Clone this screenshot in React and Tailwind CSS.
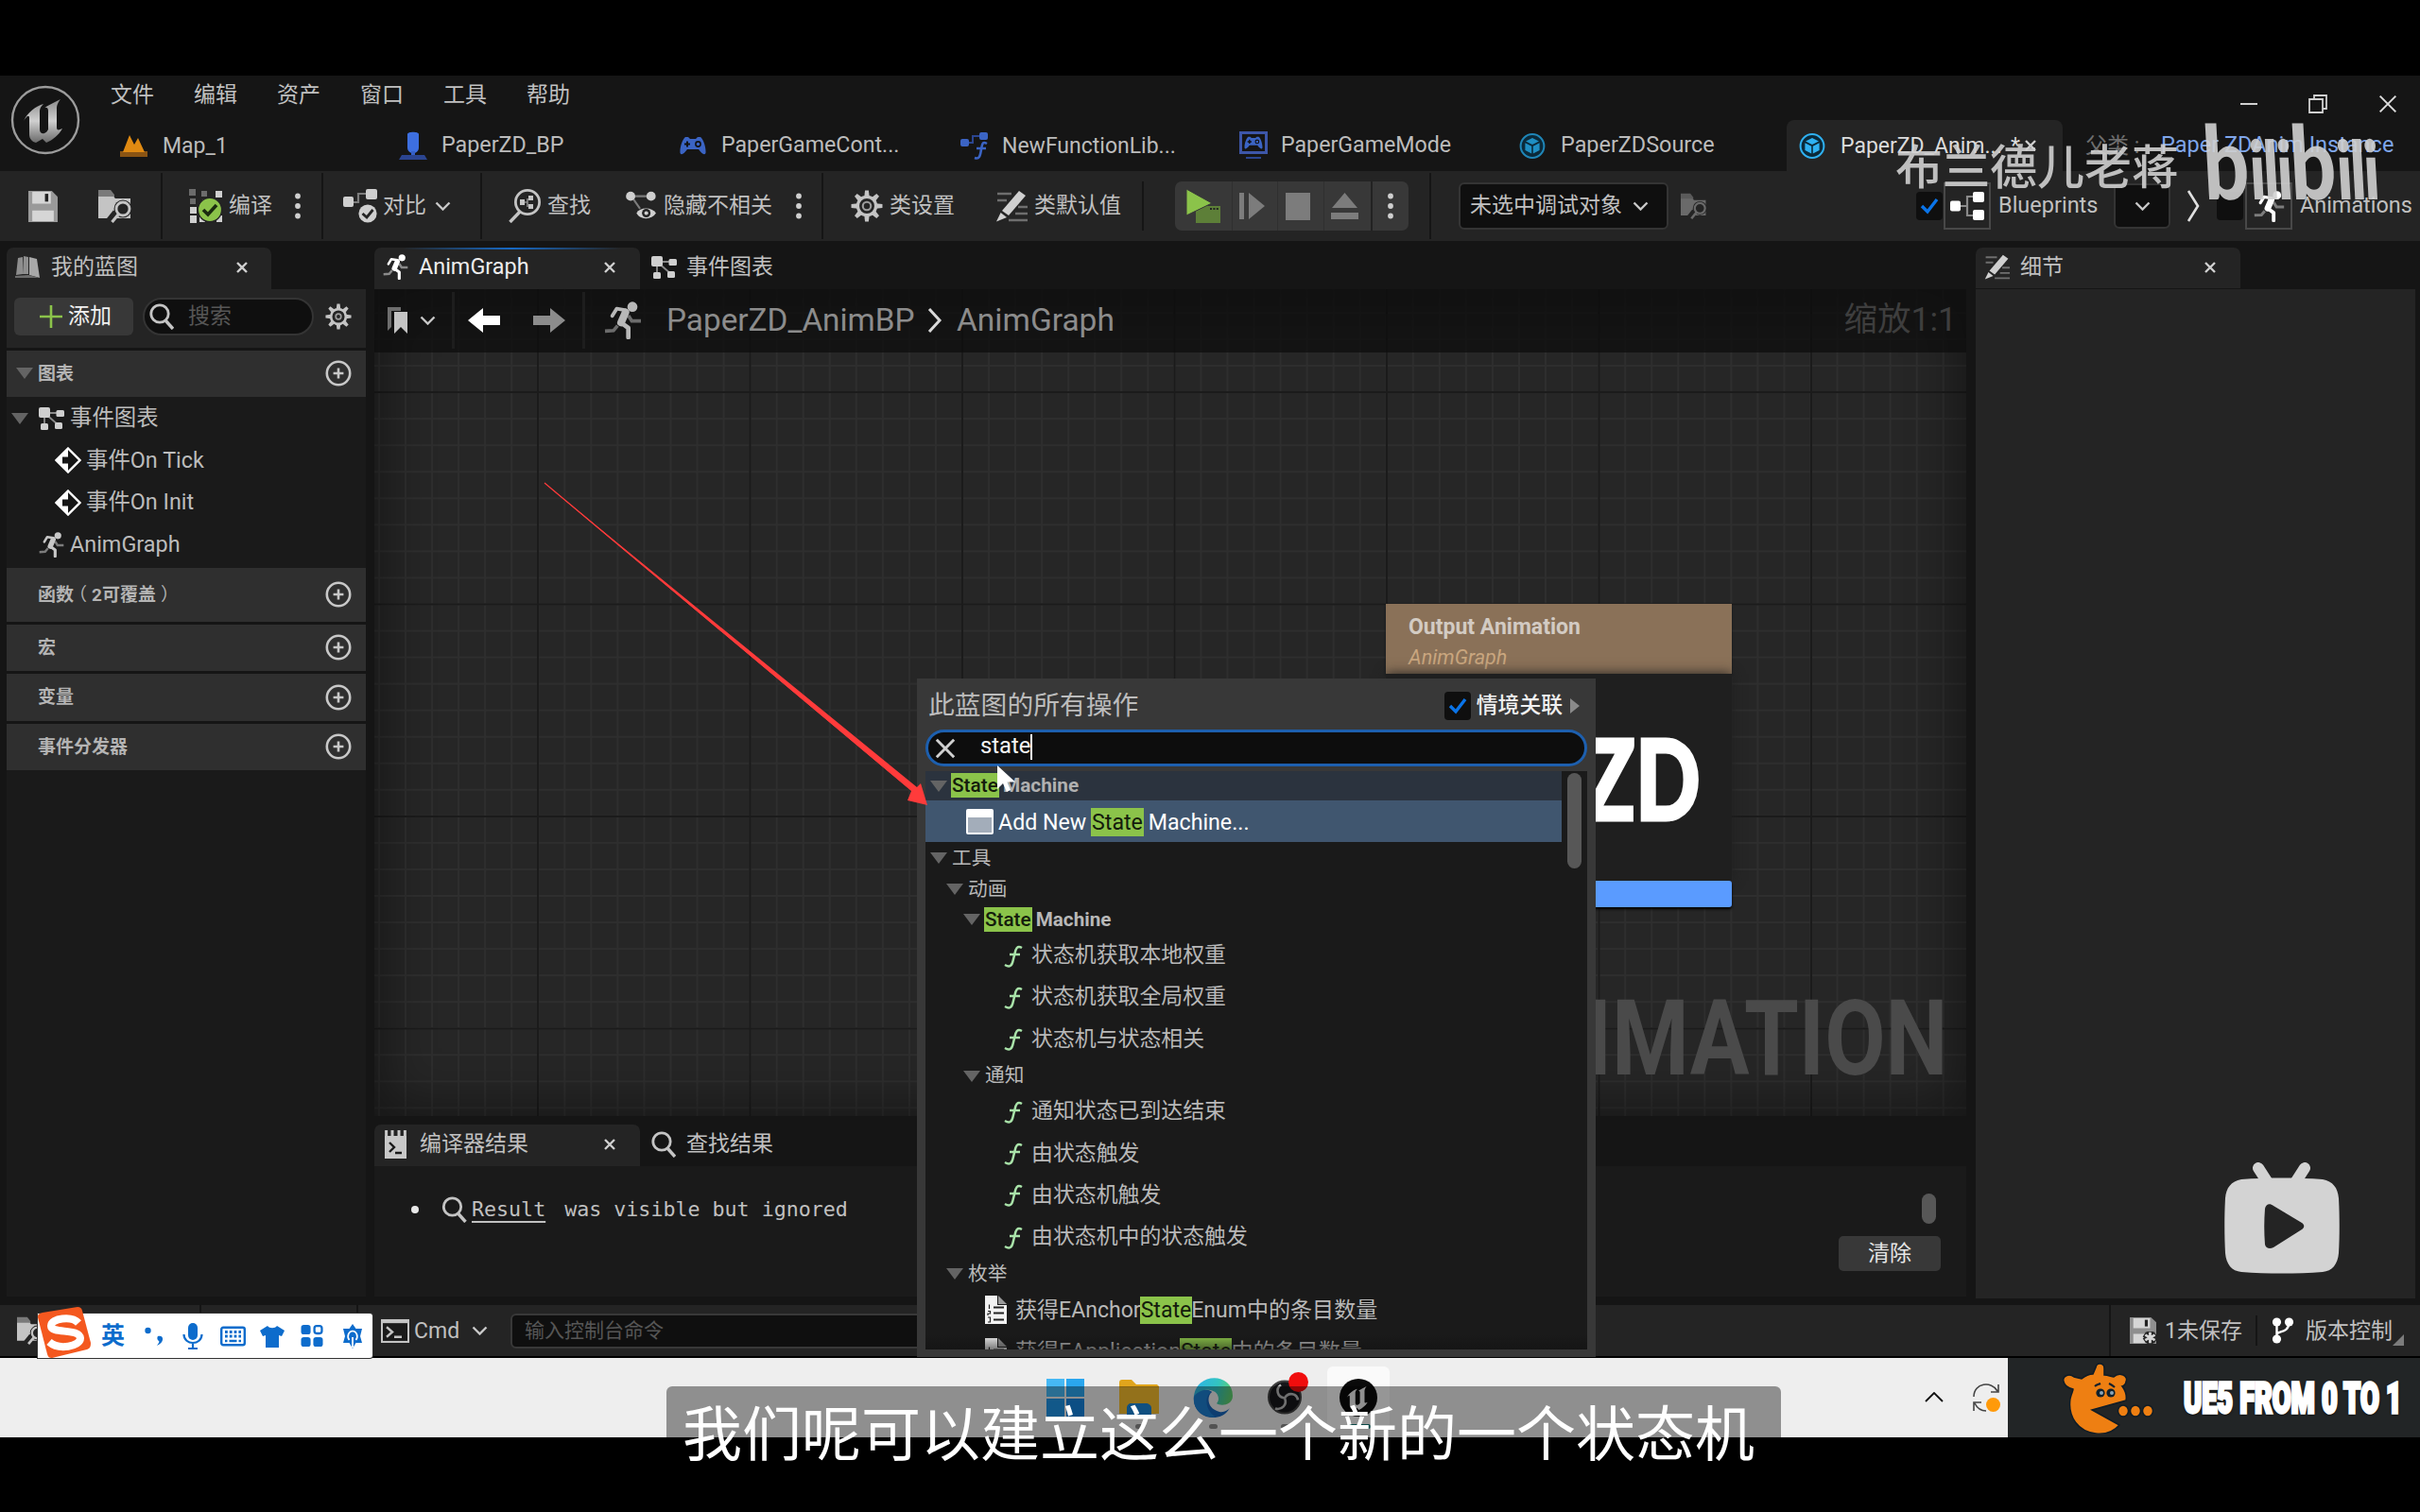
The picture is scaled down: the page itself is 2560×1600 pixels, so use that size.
import React from "react";

const Svg = ({ c = "", vb = "0 0 24 24", children, stretch }) => (
  <svg viewBox={vb} className={"shrink-0 " + c} fill="none" preserveAspectRatio={stretch ? "none" : "xMidYMid meet"}>
    {children}
  </svg>
);

const T = ({ c = "", children }) => <span className={"shrink-0 whitespace-nowrap " + c}>{children}</span>;

const Divider = ({ c = "" }) => <div className={"w-[2px] shrink-0 bg-[#151515] " + c} />;

const Chevron = ({ c = "" }) => (
  <Svg vb="0 0 17 10" c={"h-[10px] w-[17px] " + c}>
    <path d="M1.5 1.5 8.5 8.5 15.5 1.5" stroke="#c8c8c8" strokeWidth="2.4" />
  </Svg>
);

const Cross = ({ c = "", color = "#d0d0d0", w = 2.4 }) => (
  <Svg vb="0 0 12 12" c={c}>
    <path d="M1 1 11 11M11 1 1 11" stroke={color} strokeWidth={w} />
  </Svg>
);

const Dots = ({ c = "" }) => (
  <Svg vb="0 0 6 28" c={"h-[28px] w-[6px] " + c}>
    <circle cx="3" cy="3.5" r="2.9" fill="#cfcfcf" />
    <circle cx="3" cy="14" r="2.9" fill="#cfcfcf" />
    <circle cx="3" cy="24.5" r="2.9" fill="#cfcfcf" />
  </Svg>
);

const Save = ({ c = "", star }) => (
  <Svg vb="0 0 30 32" stretch c={c}>
    <path d="M0 0H24L30 6V32H0Z" fill={star ? "#8f8f8f" : "#9a9a9a"} />
    <path d="M4 1H23V13H4ZM4 20H26V31H4Z" fill="#d6d6d6" />
    <rect x="17" y="3" width="3.4" height="8" fill="#222" />
    {star && <path d="M23 17V32M16.5 20.5 29.5 28.5M29.5 20.5 16.5 28.5" stroke="#242424" strokeWidth="7" />}
    {star && <path d="M23 18V31M17.5 21.3 28.5 27.7M28.5 21.3 17.5 27.7" stroke="#d6d6d6" strokeWidth="3" />}
  </Svg>
);

const FolderSearch = ({ c = "", a = "#c4c4c4", b = "#7a7a7a", bg = "#242424" }) => (
  <Svg vb="0 0 36 36" c={c}>
    <path d="M0 1H13L17 6V10H0Z" fill={b} />
    <path d="M0 8H16L18 10H34V31H0Z" fill={a} />
    <circle cx="26" cy="21" r="9.5" fill={bg} />
    <path d="M19 25 11 35" stroke={bg} strokeWidth="8" />
    <circle cx="26" cy="21" r="7" stroke={a} strokeWidth="2.8" />
    <path d="M21.5 26.5 14.5 35" stroke={a} strokeWidth="3.2" />
  </Svg>
);

const Magnifier = ({ c = "", color = "#c4c4c4" }) => (
  <Svg vb="0 0 26 28" c={c}>
    <circle cx="11" cy="11" r="9.2" stroke={color} strokeWidth="2.8" />
    <path d="M17 18 25 27" stroke={color} strokeWidth="3.4" />
  </Svg>
);

const Gear = ({ c = "", color = "#c4c4c4", hub = 3.2 }) => (
  <Svg vb="0 0 32 32" c={c}>
    {[0, 45, 90, 135, 180, 225, 270, 315].map((r) => (
      <path key={r} d="M13.4 7 14.2 0.5H17.8L18.6 7Z" fill={color} transform={`rotate(${r} 16 16)`} />
    ))}
    <circle cx="16" cy="16" r="9" stroke={color} strokeWidth="3" />
    <circle cx="16" cy="16" r={hub} stroke={color} strokeWidth="2" opacity="0.75" />
  </Svg>
);

const Runner = ({ c = "", color = "#d0d0d0", dim = "#7c7c7c" }) => (
  <Svg vb="0 0 24 24" c={c}>
    <path d="M15.5 9 17.6 12.4 23.4 12.4M0.6 18.8 6 18.5 8.6 15.4" stroke={dim} strokeWidth="2.2" />
    <circle cx="18" cy="3.4" r="3.2" fill={color} />
    <path d="M14 5.6 8 4.6 5.2 9.2" stroke={color} strokeWidth="2.3" strokeLinejoin="round" strokeLinecap="round" />
    <path d="M13.6 7 10.8 13.4" stroke={color} strokeWidth="4.8" strokeLinecap="round" />
    <path d="M11 13.6 15.4 16.8 15.4 22.8" stroke={color} strokeWidth="2.8" strokeLinejoin="round" strokeLinecap="round" />
  </Svg>
);

const GraphIcon = ({ c = "" }) => (
  <Svg vb="0 0 27 24" c={c}>
    <path d="M6 6H22M6 6V20M6 6 21 19" stroke="#8a8a8a" strokeWidth="1.8" />
    <rect x="0" y="0" width="12" height="11" rx="2" fill="#cfcfcf" />
    <rect x="18.5" y="3" width="8.5" height="7" rx="1.5" fill="#cfcfcf" />
    <rect x="2" y="17" width="8" height="7" rx="1.5" fill="#cfcfcf" />
    <rect x="17" y="16" width="8" height="7" rx="1.5" fill="#cfcfcf" />
  </Svg>
);

const EditIcon = ({ c = "" }) => (
  <Svg vb="0 0 34 34" c={c}>
    <path d="M2 4H17M2 11H12M24 18H34M21 25H34M14 32H34" stroke="#6e6e6e" strokeWidth="2.4" />
    <path d="M25 1 32 6 14 27 7 22Z" fill="#d0d0d0" />
    <path d="M5.6 24 12 29 1 33.5Z" fill="#d0d0d0" />
  </Svg>
);

const CirclePlus = () => (
  <Svg vb="0 0 28 28" c="h-[28px] w-[28px]">
    <circle cx="14" cy="14" r="12.2" stroke="#c8c8c8" strokeWidth="2.6" />
    <path d="M14 8.6V19.4M8.6 14H19.4" stroke="#c8c8c8" strokeWidth="2.6" />
  </Svg>
);

const Tri = ({ c = "" }) => (
  <Svg vb="0 0 18 12" c={"h-[12px] w-[18px] " + c}>
    <path d="M0 0H18L9 12Z" fill="#646464" />
  </Svg>
);

const UnrealU = ({ fill }) => (
  <path
    fill={fill}
    d="M14 38C18 29 27 22 35 20C31 24 31 26 31 29V47C31 51 34 52 36 51C38 50 39 49 40 47V27C40 24 38 23 36 24C41 21 47 18 53 15C49 20 49 23 49 26V45C49 48 51 48 55 46C51 53 45 58 38 61L34 57L27 61C23 60 20 57 20 52V35C20 31 17 33 14 38Z"
  />
);

const MENUS = ["文件", "编辑", "资产", "窗口", "工具", "帮助"];

const Cube = ({ on }) => (
  <Svg vb="0 0 28 28" c="h-[29px] w-[28px]">
    <circle cx="14" cy="14" r="12.4" stroke={on ? "#2fb1f2" : "#1f86b8"} strokeWidth="2" fill="#0b2a3a" />
    <path d="M14 5.5 21 9 14 12.6 7 9ZM6.4 10.8 13.2 14.2V22L6.4 18.4ZM21.6 10.8 14.8 14.2V22L21.6 18.4Z" fill={on ? "#2fb1f2" : "#1f8fc4"} />
  </Svg>
);

const Gamepad = ({ c = "" }) => (
  <Svg vb="0 0 28 20" c={c}>
    <path d="M6 1H9L11 3H17L19 1H22C25 3 28 12 27.5 18C26 21 23 18 20 14H8C5 18 2 21 .5 18C0 12 3 3 6 1Z" fill="#3b64c4" />
    <path d="M8 5.5V11.5M5 8.5H11" stroke="#111" strokeWidth="2" />
    <circle cx="19.5" cy="8.5" r="2.6" stroke="#111" strokeWidth="1.6" />
  </Svg>
);

function TitleBar() {
  return (
    <div className="flex h-[101px] shrink-0">
      <div className="w-[117px] shrink-0 pl-[11px] pt-[10px]">
        <Svg vb="0 0 74 74" c="h-[74px] w-[74px]">
          <defs>
            <linearGradient id="ug" x1="0" y1="0" x2="0" y2="1">
              <stop offset="0" stopColor="#8a8a8a" />
              <stop offset="0.5" stopColor="#d0d0d0" />
              <stop offset="1" stopColor="#6a6a6a" />
            </linearGradient>
          </defs>
          <circle cx="37" cy="37" r="35" stroke="#9c9c9c" strokeWidth="2.4" fill="#141414" />
          <UnrealU fill="url(#ug)" />
        </Svg>
      </div>
      <div className="flex flex-1 flex-col">
        <div className="flex h-[47px] pt-[7px]">
          {MENUS.map((m) => (
            <div key={m} className="flex h-[26px] w-[88px] items-center text-[#c0c0c0]">{m}</div>
          ))}
          <div className="ml-auto flex h-[46px] items-center pr-[24px]">
            <div className="h-[2px] w-[18px] bg-[#d0d0d0]" />
            <Svg vb="0 0 20 20" c="ml-[54px] h-[20px] w-[20px]">
              <path d="M6 5V1H19V15H15" stroke="#d0d0d0" strokeWidth="1.8" />
              <path d="M1 5H15V19H1Z" stroke="#d0d0d0" strokeWidth="1.8" />
            </Svg>
            <Cross c="ml-[54px] h-[20px] w-[20px]" w={1.2} color="#dcdcdc" />
          </div>
        </div>
        <div className="flex h-[54px] items-center text-[#bcbcbc]">
          <div className="flex w-[305px] shrink-0 items-center pl-[10px]">
            <Svg vb="0 0 29 24" c="mr-[16px] h-[24px] w-[29px]">
              <path d="M0 18H29V24H0Z" fill="#8a5413" />
              <path d="M3 19 10 1 15 11 19 4 26 19Z" fill="#e08a12" />
            </Svg>
            <T>Map_1</T>
          </div>
          <div className="flex w-[297px] shrink-0 items-center text-[23.3px]">
            <Svg vb="0 0 30 30" c="mr-[15px] h-[30px] w-[30px]">
              <path d="M9 3C9 0 21 0 21 3V17C21 21 18 23 15 23S9 21 9 17Z" fill="#3d6fe0" />
              <path d="M13 21H17V27H13Z" fill="#3560c8" />
              <path d="M3 25H27L30 30H0Z" fill="#2b4590" />
            </Svg>
            <T>PaperZD_BP</T>
          </div>
          <div className="flex w-[297px] shrink-0 items-center text-[23.2px]">
            <Gamepad c="mr-[16px] h-[20px] w-[28px]" />
            <T>PaperGameCont...</T>
          </div>
          <div className="flex w-[295px] shrink-0 items-center">
            <Svg vb="0 0 30 30" c="mr-[14px] h-[30px] w-[30px]">
              <rect x="0" y="8" width="9" height="8" rx="2" fill="#3b64c4" />
              <rect x="20" y="1" width="9" height="8" rx="2" fill="#3b64c4" />
              <path d="M9 12H13V5H20" stroke="#2b4590" strokeWidth="2" />
              <path d="M28 13C23 10 23 14 22 19C21 26 20 30 15 28M17 18H27" stroke="#3b64c4" strokeWidth="2.6" />
            </Svg>
            <T>NewFunctionLib...</T>
          </div>
          <div className="flex w-[296px] shrink-0 items-center text-[23.2px]">
            <div className="mr-[14px] flex h-[30px] w-[30px] shrink-0 flex-col items-center">
              <div className="flex h-[24px] w-[30px] items-center justify-center border-[3px] border-[#3d56a8]">
                <Gamepad c="h-[14px] w-[20px]" />
              </div>
              <div className="mt-[3px] h-[2px] w-[16px] bg-[#2b4590]" />
            </div>
            <T>PaperGameMode</T>
          </div>
          <div className="flex w-[283px] shrink-0 items-center text-[23.4px]">
            <div className="mr-[16px] flex"><Cube /></div>
            <T>PaperZDSource</T>
          </div>
          <div className="flex h-[54px] w-[292px] shrink-0 items-center rounded-t-[8px] bg-[#242424] pl-[13px] text-[#dcdcdc]">
            <Cube on />
            <T c="ml-[16px] w-[180px]">PaperZD_Anim...</T>
            <T>*</T>
            <Cross c="ml-[5px] h-[12px] w-[12px]" />
          </div>
          <T c="ml-[24px] w-[80px] text-[#6e6e6e]">父类 :</T>
          <T c="text-[23.5px] text-[#7fa6ea]">Paper ZDAnim Instance</T>
        </div>
      </div>
    </div>
  );
}

const Check = ({ on, c = "" }) => (
  <div className={"flex h-[30px] w-[28px] shrink-0 items-center justify-center rounded-[4px] bg-[#0f0f0f] " + c}>
    {on && (
      <Svg vb="0 0 20 18" c="h-[18px] w-[20px]">
        <path d="M2 9 8 15 18 2" stroke="#0a74e8" strokeWidth="3.4" />
      </Svg>
    )}
  </div>
);

function Toolbar() {
  return (
    <div className="flex h-[74px] shrink-0 items-center bg-[#242424] text-[#c0c0c0]">
      <Save c="ml-[30px] h-[33px] w-[31px]" />
      <FolderSearch c="ml-[43px] h-[36px] w-[36px]" />
      <Divider c="ml-[30px] h-[70px]" />
      <Svg vb="0 0 36 36" c="ml-[28px] h-[36px] w-[36px]">
        <path d="M0 0H7V7H0ZM13 2H19V8H13ZM1 10H7V16H1Z" fill="#6c6c6c" />
        <path d="M28 2H35V9H28ZM1 19H8V26H1ZM1 28H8V36H1ZM11 29H17V35H11ZM29 28H35V35H29ZM14 11H19V16H14Z" fill="#cfcfcf" />
        <circle cx="22" cy="22" r="12.6" fill="#8bc34a" stroke="#242424" strokeWidth="1.4" />
        <path d="M15 22 20 27 29 17" stroke="#1b2b10" strokeWidth="3.6" />
      </Svg>
      <T c="-mt-[1px] ml-[6px] w-[47px]">编译</T>
      <Dots c="ml-[23px]" />
      <Divider c="ml-[22px] h-[70px]" />
      <Svg vb="0 0 36 36" c="ml-[21px] h-[36px] w-[36px]">
        <path d="M9 14H16V5H26" stroke="#7c7c7c" strokeWidth="2.2" />
        <rect x="0" y="8" width="11" height="11" rx="2" fill="#cfcfcf" />
        <rect x="24" y="0" width="12" height="11" rx="2" fill="#cfcfcf" />
        <circle cx="26" cy="26" r="9.6" fill="#cfcfcf" />
        <path d="M20.5 26 25 30 31.5 22" stroke="#242424" strokeWidth="2.8" />
      </Svg>
      <T c="-mt-[1px] ml-[6px] w-[47px]">对比</T>
      <Chevron c="ml-[8px]" />
      <Divider c="ml-[31px] h-[70px]" />
      <Svg vb="0 0 34 36" c="ml-[28px] h-[36px] w-[34px]">
        <circle cx="20" cy="14" r="12.6" stroke="#c4c4c4" strokeWidth="2.8" />
        <path d="M12.5 23.5 1.5 35" stroke="#c4c4c4" strokeWidth="3.4" />
        <path d="M16 14H20M20 10V19" stroke="#8a8a8a" strokeWidth="1.6" />
        <path d="M12 11H17V17H12ZM21 7H26V12H21ZM21 16H26V21H21Z" fill="#c4c4c4" />
      </Svg>
      <T c="-mt-[1px] ml-[7px] w-[47px]">查找</T>
      <Svg vb="0 0 34 34" c="ml-[35px] h-[32px] w-[34px]">
        <path d="M5 6H28M7 7 16 20" stroke="#7c7c7c" strokeWidth="2.2" />
        <circle cx="5.4" cy="6" r="5.2" fill="#cfcfcf" />
        <circle cx="28.4" cy="6" r="5.2" fill="#cfcfcf" />
        <path d="M12 25C16 18 29 18 34 25C29 33 16 33 12 25Z" fill="#cfcfcf" />
        <circle cx="23" cy="25" r="4.8" fill="#242424" />
        <circle cx="23" cy="25" r="2.2" fill="#cfcfcf" />
      </Svg>
      <T c="-mt-[1px] ml-[7px] w-[117px]">隐藏不相关</T>
      <Dots c="ml-[23px]" />
      <Divider c="ml-[21px] h-[70px]" />
      <Gear c="ml-[29px] h-[34px] w-[34px]" hub={4} />
      <T c="-mt-[1px] ml-[7px] w-[70px]">类设置</T>
      <EditIcon c="ml-[42px] h-[34px] w-[34px]" />
      <T c="-mt-[1px] ml-[7px] w-[93px]">类默认值</T>
      <Divider c="ml-[21px] h-[52px]" />
      <div className="ml-[33px] flex h-[52px] w-[247px] shrink-0 items-center rounded-[7px] bg-[#383838]">
        <Svg vb="0 0 36 36" c="ml-[12px] h-[36px] w-[36px]">
          <path d="M10 18H36V36H10Z" fill="#5d7f38" />
          <path d="M0 0 27 15 0 28Z" fill="#8bc34a" stroke="#383838" strokeWidth="1" />
          <path d="M25 21H34" stroke="#222" strokeWidth="2" strokeDasharray="2 1.4" />
        </Svg>
        <div className="ml-[12px] h-[52px] w-px bg-[#2f2f2f]" />
        <Svg vb="0 0 28 30" c="ml-[7px] h-[30px] w-[28px]">
          <path d="M0 1H5V29H0ZM10 1 27 15 10 29Z" fill="#7c7c7c" />
        </Svg>
        <div className="ml-[12px] h-[52px] w-px bg-[#2f2f2f]" />
        <div className="ml-[8px] h-[29px] w-[26px] bg-[#7c7c7c]" />
        <div className="ml-[14px] h-[52px] w-px bg-[#2f2f2f]" />
        <Svg vb="0 0 29 28" c="ml-[7px] h-[28px] w-[29px]">
          <path d="M14.5 0 28 16H1ZM0 21H29V28H0Z" fill="#7c7c7c" />
        </Svg>
        <div className="ml-[13px] h-[52px] w-[2px] bg-[#222]" />
        <Dots c="ml-[16px]" />
      </div>
      <Divider c="ml-[22px] h-[70px]" />
      <div className="ml-[29px] flex h-[50px] w-[222px] shrink-0 items-center justify-between rounded-[6px] border-2 border-[#343434] bg-[#0f0f0f] pl-[10px] pr-[19px]">
        <T c="-mt-[1px]">未选中调试对象</T>
        <Chevron />
      </div>
      <FolderSearch c="ml-[13px] h-[28px] w-[28px]" a="#6a6a6a" b="#5a5a5a" />
      <Check on c="ml-[221px]" />
      <div className="ml-px flex h-[50px] w-[50px] shrink-0 items-center justify-center border-2 border-[#484848]">
        <Svg vb="0 0 36 30" c="h-[30px] w-[36px]">
          <path d="M9 15H18M24 5H18V25H24" stroke="#8a8a8a" strokeWidth="2.2" />
          <rect x="0" y="9.5" width="11" height="11" rx="2" fill="#fff" />
          <rect x="24" y="0" width="12" height="11" rx="2" fill="#fff" />
          <rect x="24" y="19" width="12" height="11" rx="2" fill="#fff" />
        </Svg>
      </div>
      <T c="ml-[8px] w-[107px] text-[23.5px]">Blueprints</T>
      <div className="ml-[15px] flex h-[48px] w-[60px] shrink-0 items-center justify-center rounded-[6px] border-2 border-[#343434] bg-[#0f0f0f]">
        <Chevron />
      </div>
      <Svg vb="0 0 14 34" c="ml-[17px] h-[34px] w-[14px]">
        <path d="M2 1 12 17 2 33" stroke="#e0e0e0" strokeWidth="2.6" />
      </Svg>
      <Check c="ml-[18px]" />
      <div className="ml-[2px] flex h-[50px] w-[50px] shrink-0 items-center justify-center border-2 border-[#484848]">
        <Runner c="h-[33px] w-[33px]" color="#fff" />
      </div>
      <T c="ml-[8px] text-[23.4px]">Animations</T>
    </div>
  );
}

const Section = ({ title, h, open }) => (
  <div className={"flex shrink-0 items-center bg-[#2f2f2f] pb-[1px] pr-[15px] text-[19px] font-bold text-[#b4b4b4] " + h}>
    <div className="flex w-[33px] shrink-0 pl-[10px]">{open && <Tri />}</div>
    <T c="mr-auto">{title}</T>
    <CirclePlus />
  </div>
);

const EventIcon = () => (
  <Svg vb="0 0 28 28" c="mr-[5px] h-[28px] w-[28px]">
    <path d="M14 1.5 26.5 14 14 26.5 1.5 14Z" fill="#161616" stroke="#fff" strokeWidth="2.4" />
    <path d="M14 1.5V26.5L1.5 14Z" fill="#fff" />
    <path d="M8 10.5H14V7L20.5 14 14 21V17.5H8Z" fill="#161616" />
  </Svg>
);

function LeftPanel() {
  return (
    <div className="ml-[7px] flex w-[380px] shrink-0 flex-col">
      <div className="mt-[7px] flex h-[44px] w-[280px] shrink-0 items-center rounded-t-[7px] bg-[#242424] pb-[3px] text-[#c0c0c0]">
        <Svg vb="0 0 27 24" c="ml-[9px] h-[24px] w-[27px]">
          <path d="M3 2 8 1V19L1 20ZM9 0 14 1V19L8 19Z" fill="#8e8e8e" />
          <path d="M15 1 23 3 26 23 15 20Z" fill="#a8a8a8" />
          <path d="M0 21 14 20 26 23H0Z" fill="#6c6c6c" />
        </Svg>
        <T c="ml-[11px] w-[196px]">我的蓝图</T>
        <Cross c="h-[12px] w-[12px]" />
      </div>
      <div className="flex h-[62px] shrink-0 items-center bg-[#242424] pb-[4px]">
        <div className="ml-[8px] flex h-[40px] w-[126px] shrink-0 items-center rounded-[6px] bg-[#383838] pl-[27px] text-[#f0f0f0]">
          <Svg vb="0 0 24 24" c="mr-[6px] h-[24px] w-[24px]">
            <path d="M12 0V24M0 12H24" stroke="#8bc34a" strokeWidth="2.6" />
          </Svg>
          <T c="-mt-[2px]">添加</T>
        </div>
        <div className="ml-[10px] flex h-[40px] w-[181px] shrink-0 items-center rounded-full border-2 border-[#343434] bg-[#0f0f0f] pl-[5px]">
          <Magnifier c="h-[28px] w-[26px]" />
          <T c="-mt-[2px] ml-[15px] text-[#565656]">搜索</T>
        </div>
        <Gear c="ml-[12px] h-[28px] w-[28px]" />
      </div>
      <div className="h-[3px] shrink-0" />
      <Section title="图表" h="h-[49px]" open />
      <div className="flex h-[181px] shrink-0 flex-col bg-[#1a1a1a] text-[23.4px] text-[#bcbcbc]">
        <div className="flex h-[45px] items-center pl-[5px]">
          <Tri />
          <GraphIcon c="ml-[11px] mr-[6px] h-[24px] w-[27px]" />
          <T>事件图表</T>
        </div>
        <div className="flex h-[44.5px] items-center pl-[51px]"><EventIcon /><T>事件On Tick</T></div>
        <div className="flex h-[44.5px] items-center pl-[51px]"><EventIcon /><T>事件On Init</T></div>
        <div className="flex h-[44.5px] items-center pl-[34px]">
          <Runner c="mr-[6px] h-[27px] w-[27px]" color="#c8c8c8" />
          <T>AnimGraph</T>
        </div>
      </div>
      <Section
        title={<>函数<span className="inline-block -translate-x-[5px] font-normal">（</span>2可覆盖<span className="inline-block translate-x-[5px] font-normal">）</span></>}
        h="h-[57px]"
      />
      <div className="h-[3px] shrink-0" />
      <Section title="宏" h="h-[49px]" />
      <div className="h-[3px] shrink-0" />
      <Section title="变量" h="h-[50px]" />
      <div className="h-[3px] shrink-0" />
      <Section title="事件分发器" h="h-[49px]" />
      <div className="h-[557px] shrink-0 bg-[#1a1a1a]" />
    </div>
  );
}

function Graph() {
  return (
    <div className="relative h-[875px] w-[1684px] shrink-0 overflow-hidden bg-[#262626]">
      <div className="absolute inset-0 bg-[linear-gradient(to_right,#2e2e2e_1.5px,transparent_1.5px),linear-gradient(to_bottom,#2e2e2e_1.5px,transparent_1.5px)] bg-[length:28.06px_28.06px] bg-[position:4px_24px]" />
      <div className="absolute inset-0 bg-[linear-gradient(to_right,#1b1b1b_1.5px,transparent_1.5px),linear-gradient(to_bottom,#1b1b1b_1.5px,transparent_1.5px)] bg-[length:224.5px_224.5px] bg-[position:172px_108px]" />
      <div className="absolute inset-0 shadow-[inset_0_0_50px_12px_rgba(0,0,0,0.4)]" />

      <div className="absolute right-[19px] top-[738px] origin-right scale-x-[0.842] text-[111px] font-bold leading-none text-[#4a4a4a]">ANIMATION</div>

      <div className="absolute left-[1070px] top-[333px] flex w-[366px] flex-col">
        <div className="flex h-[74px] flex-col justify-center bg-[#8a7158] pl-[24px] pt-[6px] shadow-[0_2px_2px_#0c1218]">
          <span className="text-[23px] font-bold leading-[32px] text-[#d3cbc3]">Output Animation</span>
          <span className="text-[21.6px] italic leading-[31px] text-[#c9a67f]">AnimGraph</span>
        </div>
        <div className="flex h-[219px] items-center justify-end bg-[#1f1f1f] pr-[33px] shadow-[0_0_12px_#1f1f1f]">
          <span className="-mt-px origin-right scale-x-[0.76] font-['Lato'] text-[119px] font-black leading-none text-white [-webkit-text-stroke:3px_#fff]">ZD</span>
        </div>
        <div className="h-[28px] rounded-r-[3px] bg-[#5a9bff] shadow-[0_2px_3px_#000]" />
      </div>

      <div className="absolute inset-x-0 top-0 flex h-[67px] items-center bg-[#0d0d0d]/75 pb-[2px]">
        <Svg vb="0 0 22 30" c="ml-[14px] h-[30px] w-[22px]">
          <path d="M0 1H14V5H4V22L0 26Z" fill="#6e6e6e" />
          <path d="M7 6H21V29L14 22 7 29Z" fill="#c4c4c4" />
        </Svg>
        <Chevron c="ml-[12px]" />
        <div className="ml-[17px] h-[60px] w-[3px] bg-[#1d1d1d]" />
        <Svg vb="0 0 34 26" c="ml-[14px] h-[26px] w-[34px]"><path d="M0 13 16 0V8H34V18H16V26Z" fill="#fff" /></Svg>
        <Svg vb="0 0 34 26" c="ml-[35px] h-[26px] w-[34px]"><path d="M34 13 18 0V8H0V18H18V26Z" fill="#8c8c8c" /></Svg>
        <div className="ml-[18px] h-[60px] w-[3px] bg-[#1d1d1d]" />
        <Runner c="ml-[20px] h-[40px] w-[40px]" color="#b8b8b8" dim="#6c6c6c" />
        <T c="ml-[26px] w-[263px] text-[33.3px] text-[#8c8c8c]">PaperZD_AnimBP</T>
        <Svg vb="0 0 16 26" c="ml-[13px] h-[26px] w-[16px]"><path d="M2 1 13 13 2 25" stroke="#d8d8d8" strokeWidth="3" /></Svg>
        <T c="ml-[15px] text-[33.5px] text-[#8c8c8c]">AnimGraph</T>
        <T c="ml-auto pr-[10px] text-[35.5px] text-[#3e3e3e]">缩放1:1</T>
      </div>
    </div>
  );
}

function Center() {
  return (
    <div className="ml-[9px] flex w-[1684px] shrink-0 flex-col text-[#c0c0c0]">
      <div className="mt-[7px] flex h-[44px] shrink-0 items-center">
        <div className="relative flex h-[44px] w-[281px] shrink-0 items-center overflow-hidden rounded-t-[7px] bg-[#242424] pb-[3px] pl-[9px] text-[#ededed]">
          <div className="absolute left-[30px] right-[20px] top-0 h-[2px] bg-[linear-gradient(to_right,transparent,#1769c4,transparent)]" />
          <Runner c="h-[27px] w-[27px]" color="#fff" dim="#8a8a8a" />
          <T c="ml-[11px] w-[196px] text-[23.4px]">AnimGraph</T>
          <Cross c="h-[12px] w-[12px]" />
        </div>
        <GraphIcon c="mb-[3px] ml-[12px] h-[24px] w-[27px]" />
        <T c="mb-[3px] ml-[10px]">事件图表</T>
      </div>
      <Graph />
      <div className="mt-[9px] flex h-[44px] shrink-0 items-center">
        <div className="flex h-[44px] w-[281px] shrink-0 items-center rounded-t-[7px] bg-[#242424] pb-[3px] pl-[11px]">
          <Svg vb="0 0 23 30" c="h-[30px] w-[23px]">
            <path d="M0 6H23V30H0Z" fill="#c8c8c8" />
            <path d="M1.6 0V7M8 0V7M15 0V7M21.4 0V7" stroke="#c8c8c8" strokeWidth="3" />
            <path d="M5 13 10 18 5 23M11 24H18" stroke="#1a1a1a" strokeWidth="2.4" />
          </Svg>
          <T c="ml-[14px] w-[195px]">编译器结果</T>
          <Cross c="h-[12px] w-[12px]" />
        </div>
        <Magnifier c="mb-[2px] ml-[12px] h-[28px] w-[26px]" />
        <T c="mb-[3px] ml-[11px]">查找结果</T>
      </div>
      <div className="flex h-[138px] shrink-0 bg-[#1a1a1a]">
        <div className="flex h-[91px] items-center font-['DejaVu_Sans_Mono'] text-[21.65px]">
          <div className="ml-[39px] h-[8px] w-[8px] rounded-full bg-[#e8e8e8]" />
          <Magnifier c="ml-[24px] h-[28px] w-[27px]" />
          <T c="ml-[5px] underline underline-offset-[5px]">Result</T>
          <T c="ml-[20px]">was visible but ignored</T>
        </div>
        <div className="ml-auto mr-[27px] flex flex-col items-end">
          <div className="mr-[5px] mt-[29px] h-[32px] w-[15px] rounded-full bg-[#575757]" />
          <div className="mt-[13px] flex h-[37px] w-[108px] items-center justify-center rounded-[5px] bg-[#383838] text-[#e6e6e6]">清除</div>
        </div>
      </div>
    </div>
  );
}

function Details() {
  return (
    <div className="ml-[10px] flex w-[465px] shrink-0 flex-col">
      <div className="mt-[7px] flex h-[43px] w-[280px] shrink-0 items-center rounded-t-[7px] bg-[#242424] pb-[2px] pl-[9px] text-[#c0c0c0]">
        <EditIcon c="h-[27px] w-[27px]" />
        <T c="ml-[11px] w-[195px]">细节</T>
        <Cross c="h-[12px] w-[12px]" />
      </div>
      <div className="mt-px h-[1068px] shrink-0 bg-[#242424]" />
    </div>
  );
}

function StatusBar() {
  return (
    <div className="mt-[7px] flex h-[54px] shrink-0 items-center bg-[#242424] text-[#c0c0c0]">
      <FolderSearch c="ml-[18px] h-[30px] w-[30px]" />
      <Divider c="ml-[163px] h-[54px]" />
      <Divider c="ml-[164px] h-[54px]" />
      <Svg vb="0 0 30 24" stretch c="ml-[24px] h-[25px] w-[30px]">
        <rect x="1" y="1" width="28" height="22" fill="#1a1a1a" stroke="#c4c4c4" strokeWidth="2" />
        <path d="M1 2H29" stroke="#c4c4c4" strokeWidth="4" />
        <path d="M6 8 12 13 6 18M14 18H22" stroke="#c4c4c4" strokeWidth="2.4" />
      </Svg>
      <T c="ml-[5px] w-[61px]">Cmd</T>
      <Chevron />
      <div className="ml-[24px] flex h-[37px] w-[440px] shrink-0 items-center rounded-[6px] border-2 border-[#383838] bg-[#0f0f0f] pl-[13px] text-[21px] text-[#565656]">
        输入控制台命令
      </div>
      <Divider c="ml-auto h-[54px]" />
      <Save c="ml-[20px] h-[28px] w-[28px]" star />
      <T c="ml-[9px] w-[84px]">1未保存</T>
      <Divider c="ml-[12px] h-[32px]" />
      <Svg vb="0 0 24 28" c="ml-[15px] h-[28px] w-[24px]">
        <path d="M5.5 5V23M5.5 18C6 14 18 17 18.5 6" stroke="#fff" strokeWidth="2.4" />
        <circle cx="5.5" cy="5" r="4.6" fill="#fff" />
        <circle cx="18.5" cy="5" r="4.6" fill="#fff" />
        <circle cx="5.5" cy="23" r="4.6" fill="#fff" />
      </Svg>
      <T c="ml-[12px] w-[92px]">版本控制</T>
      <Svg vb="0 0 12 12" c="mr-[17px] mt-[20px] h-[12px] w-[12px]"><path d="M12 0V12H0Z" fill="#7c7c7c" /></Svg>
    </div>
  );
}

const Hl = ({ children }) => <span className="-mx-[1px] bg-[#8bc34a] px-[1px] py-[1px] text-[#141c0c]">{children}</span>;

const Group = ({ c, children }) => (
  <div className={"flex h-[32.4px] shrink-0 items-center text-[20.7px] " + c}>
    <Tri c="mr-[5px]" />
    <T>{children}</T>
  </div>
);

const Fn = ({ children }) => (
  <div className="flex h-[44.3px] shrink-0 items-center pl-[83px] text-[22.9px]">
    <Svg vb="0 0 20 24" c="mr-[9px] h-[24px] w-[20px]">
      <path d="M19 3C14 0 12.5 4 11.5 9L9.5 17C8.5 22 6 24 1 21M6 10H17" stroke="#a9e3a9" strokeWidth="2.5" />
    </Svg>
    <T>{children}</T>
  </div>
);

const EnumRow = ({ children }) => (
  <div className="flex h-[44.3px] shrink-0 items-center pl-[63px] text-[23.05px]">
    <Svg vb="0 0 23 30" c="mr-[9px] h-[30px] w-[23px]">
      <path d="M0 0H13V10H23V30H0Z" fill="#f2f2f2" />
      <path d="M14 0 23 9H14Z" fill="#9a9a9a" />
      <path d="M9 12.5H20M9 18.5H20M9 25.5H20" stroke="#222" strokeWidth="2" />
      <path d="M4.5 9.5V14M3 16.5H5.5V19H3V21M3 23H5.5V28H3" stroke="#222" strokeWidth="1.2" />
    </Svg>
    <T>{children}</T>
  </div>
);

function ActionMenu() {
  return (
    <div className="absolute left-[970px] top-[718px] flex h-[718px] w-[718px] flex-col bg-[#383838] px-[9px]">
      <div className="flex h-[54px] shrink-0 items-center pl-[3px] pt-[4px]">
        <T c="mr-auto text-[27.8px] text-[#bcbcbc]">此蓝图的所有操作</T>
        <Check on />
        <T c="ml-[6px] text-[22.8px] font-medium text-[#f0f0f0]">情境关联</T>
        <Svg vb="0 0 10 16" c="ml-[8px] mr-[8px] h-[16px] w-[10px]"><path d="M0 0 10 8 0 16Z" fill="#8a8a8a" /></Svg>
      </div>
      <div className="flex h-[39px] shrink-0 items-center rounded-full border-[3px] border-[#1d5fae] bg-[#0d0d0d] pl-[7px]">
        <Cross c="h-[22px] w-[22px]" w={1.6} />
        <T c="mb-[4px] ml-[26px] text-[23.8px] text-[#f4f4f4]">state</T>
        <div className="mb-[2px] h-[27px] w-[2px] bg-white" />
      </div>
      <div className="mt-[5px] flex h-[612px] shrink-0 overflow-hidden bg-[#1a1a1a] text-[#b8b8b8]">
        <div className="flex w-[673px] shrink-0 flex-col">
          <div className="flex h-[31px] shrink-0 items-center bg-[#2b333e] pl-[5px] text-[20.8px] font-bold text-[#b0b0b0]">
            <Tri c="mr-[5px]" />
            <T><Hl><span className="font-medium">State</span></Hl> Machine</T>
          </div>
          <div className="flex h-[44.3px] shrink-0 items-center bg-[#40566f] pl-[43px] pt-[2px] text-[23.2px] text-white">
            <Svg vb="0 0 29 27" c="mb-[2px] mr-[5px] h-[27px] w-[29px]">
              <rect x="0" y="0" width="29" height="27" rx="2" fill="#fff" />
              <path d="M2 9H27V25H2Z" fill="#a3adba" />
            </Svg>
            <T>Add New <Hl>State</Hl> Machine...</T>
          </div>
          <div className="h-[1px] shrink-0" />
          <Group c="pl-[5px]">工具</Group>
          <Group c="pl-[22px]">动画</Group>
          <Group c="pl-[40px] font-bold"><Hl><span className="font-medium">State</span></Hl> Machine</Group>
          <Fn>状态机获取本地权重</Fn>
          <Fn>状态机获取全局权重</Fn>
          <Fn>状态机与状态相关</Fn>
          <Group c="pl-[40px]">通知</Group>
          <Fn>通知状态已到达结束</Fn>
          <Fn>由状态触发</Fn>
          <Fn>由状态机触发</Fn>
          <Fn>由状态机中的状态触发</Fn>
          <Group c="pl-[22px]">枚举</Group>
          <EnumRow>获得EAnchor<Hl>State</Hl>Enum中的条目数量</EnumRow>
          <EnumRow>获得EApplication<Hl>State</Hl>中的条目数量</EnumRow>
        </div>
        <div className="ml-[6px] mt-[2px] h-[101px] w-[15px] rounded-full bg-[#575757]" />
      </div>
      <div className="absolute bottom-[8px] left-[9px] right-[9px] h-[16px] bg-[linear-gradient(to_top,#1118,transparent)]" />
    </div>
  );
}

function ImeBar() {
  return (
    <div className="absolute left-[40px] top-[1383px] flex h-[54px] w-[354px] items-end">
      <div className="flex h-[47px] w-full items-center rounded-r-[3px] bg-white pl-[67px] shadow-[0_0_0_1px_#333]">
        <T c="w-[46px] text-[25px] font-bold text-[#0d6ccc]">英</T>
        <Svg vb="0 0 22 22" c="h-[22px] w-[22px]">
          <circle cx="3.5" cy="5" r="3.2" fill="#0d6ccc" />
          <path d="M14 11C20 9 22 17 13 21C15 18 16 17 15 16C13 15 13 12 14 11Z" fill="#0d6ccc" />
        </Svg>
        <Svg vb="0 0 22 28" c="ml-[18px] h-[28px] w-[22px]">
          <rect x="6" y="0" width="10" height="18" rx="5" fill="#0d6ccc" />
          <path d="M1.5 12C1.5 24 20.5 24 20.5 12M11 21V27M6 27H16" stroke="#0d6ccc" strokeWidth="2.2" />
        </Svg>
        <Svg vb="0 0 27 21" c="ml-[18px] h-[22px] w-[27px]">
          <rect x="1.2" y="1.2" width="24.6" height="18.6" rx="2" stroke="#0d6ccc" strokeWidth="2.4" />
          <path d="M5 6H22M5 10.5H22" stroke="#0d6ccc" strokeWidth="2.8" strokeDasharray="2.8 2" />
          <path d="M5 15.5H7.5M9.5 15.5H17.5M19.5 15.5H22" stroke="#0d6ccc" strokeWidth="2.6" />
        </Svg>
        <Svg vb="0 0 26 24" c="ml-[15px] h-[24px] w-[26px]">
          <path d="M8 1C10 4 16 4 18 1L26 6 23 12 20 11V24H6V11L3 12 0 6Z" fill="#0d6ccc" />
        </Svg>
        <Svg vb="0 0 24 24" c="ml-[17px] h-[23px] w-[24px]">
          <rect x="0" y="0" width="10.5" height="10.5" rx="3" fill="#0d6ccc" />
          <rect x="14.7" y="1.2" width="8.2" height="8.2" rx="2.5" stroke="#0d6ccc" strokeWidth="2.4" />
          <rect x="0" y="13.5" width="10.5" height="10.5" rx="3" fill="#0d6ccc" />
          <rect x="13.5" y="13.5" width="10.5" height="10.5" rx="3" fill="#0d6ccc" />
        </Svg>
        <Svg vb="0 0 24 26" c="ml-[19px] h-[26px] w-[24px]">
          <path d="M12 0 15.5 5 22 5 20 13 22 20 15.5 20 12 26 8.5 20 2 20 4 13 2 5 8.5 5Z" fill="#0d6ccc" />
          <path d="M12 25V14" stroke="#fff" strokeWidth="1.8" />
          <path d="M8.5 17C5.5 13 8 7.5 12 7.5S18.5 13 15.5 17" stroke="#fff" strokeWidth="1.7" />
        </Svg>
      </div>
      <Svg vb="0 0 56 54" c="absolute left-0 top-0 h-[54px] w-[56px]">
        <path d="M5 6 42 0C45 0 46 1 47 4L56 38C56 42 55 44 52 45L15 54C12 54 11 53 10 50L0 11C0 8 1 7 5 6Z" fill="#f4581f" />
        <path d="M43 17C36 9 14 12 14 20C14 29 44 22 45 33C45 42 22 46 12 37" stroke="#fff" strokeWidth="8" />
      </Svg>
    </div>
  );
}

function Taskbar() {
  return (
    <div className="flex h-[84px] shrink-0 bg-[#222526]">
      <div className="flex w-[2124px] shrink-0 items-start bg-[#eee]">
        <div className="ml-[1107px] mt-[22px] grid h-[40px] w-[40px] shrink-0 grid-cols-2 gap-[2px]">
          <div className="bg-[#46b8f4]" /><div className="bg-[#2aa6ee]" />
          <div className="bg-[#1f93e4]" /><div className="bg-[#1583dc]" />
        </div>
        <div className="flex w-[116px] shrink-0 flex-col items-center pt-[22px]">
          <Svg vb="0 0 42 38" c="h-[40px] w-[42px]">
            <path d="M0 3C0 1 1 0 3 0H13L18 5H40L42 7V36H0Z" fill="#e0a51c" />
            <path d="M0 8H42V36H0Z" fill="#f6bd2e" />
            <path d="M8 38V30C8 27 10 25 13 25H28C31 25 34 27 34 30V38Z" fill="#1c86d8" />
          </Svg>
          <div className="mt-[8px] h-[5px] w-[9px] rounded-full bg-[#8a8a8a]" />
        </div>
        <div className="flex w-[40px] shrink-0 flex-col items-center pt-[21px]">
          <Svg vb="0 0 42 42" c="h-[42px] w-[42px]">
            <defs>
              <linearGradient id="eg" x1="0" y1="0.2" x2="1" y2="0.4">
                <stop offset="0" stopColor="#2db4e8" />
                <stop offset="0.6" stopColor="#33c4c0" />
                <stop offset="1" stopColor="#5fd070" />
              </linearGradient>
            </defs>
            <path d="M1 21C2 13 12 10 20 15C14 20 15 33 28 36C33 37 37 34 39 32C34 40 28 42 21 42C9 42 0 33 1 21Z" fill="#1666bb" />
            <path d="M20 15C12 18 12 34 24 41.5C9 43 -1 32 1 19C6 12 14 11 20 15Z" fill="#1d7fd0" />
            <path d="M1 20C3 -6 42 -6 42 19C42 30 28 30 25 27C29 23 27 14 18 13C11 12 4 15 1 20Z" fill="url(#eg)" />
          </Svg>
          <div className="mt-[7px] h-[5px] w-[9px] rounded-full bg-[#8a8a8a]" />
        </div>
        <div className="relative ml-[38px] flex w-[36px] shrink-0 flex-col items-center pt-[23px]">
          <Svg vb="0 0 36 36" c="h-[37px] w-[36px]">
            <circle cx="18" cy="18" r="17" fill="#17171a" stroke="#444" strokeWidth="2" />
            <path d="M18 19C10 18 8 9 14 5M18 19C22 12 31 14 32 21M18 19C21 26 15 32 8 30" stroke="#b9b9b9" strokeWidth="2.6" />
          </Svg>
          <div className="mt-[10px] h-[5px] w-[9px] rounded-full bg-[#8a8a8a]" />
          <div className="absolute left-[22px] top-[15px] h-[21px] w-[21px] rounded-full bg-[#f00d0d]" />
        </div>
        <div className="ml-[27px] mt-[9px] flex h-[66px] w-[66px] shrink-0 flex-col items-center rounded-[6px] bg-[#fafafa] pt-[13px]">
          <Svg vb="0 0 74 74" c="h-[40px] w-[40px]">
            <circle cx="37" cy="37" r="37" fill="#0a0a0a" />
            <UnrealU fill="#eee" />
          </Svg>
          <div className="mt-[8px] h-[5px] w-[25px] rounded-full bg-[#157a78]" />
        </div>
        <Svg vb="0 0 20 11" c="ml-[566px] mt-[36px] h-[11px] w-[20px]"><path d="M1 10 10 1 19 10" stroke="#111" strokeWidth="1.8" /></Svg>
        <div className="relative ml-[31px] mt-[27px] flex">
          <Svg vb="0 0 28 30" c="h-[30px] w-[28px]">
            <path d="M1 14C1 -1 20 -3 26 8M27 1V9H19" stroke="#444" strokeWidth="1.6" />
            <path d="M1 29V20H9M2 21C5 27 9 29 14 29" stroke="#444" strokeWidth="1.6" />
          </Svg>
          <div className="absolute -right-[1px] bottom-0 h-[15px] w-[15px] rounded-full bg-[#ff9a0a]" />
        </div>
      </div>
      <Svg vb="0 0 96 75" c="ml-[58px] mt-[5px] h-[75px] w-[96px]">
        <g stroke="#0f1c26" strokeWidth="1.5">
          <path
            d="M1 20C-1 14 7 11 12 15L20 17C25 13 29 12 32 12L35 5C36 -1 44 0 44 6L44 13C48 13 52 15 54 15C60 9 70 14 67 20C67 23 64 25 63 25C66 29 68 35 67 40L31 50L60 66C53 74 44 76 35 75C17 73 5 58 8 38C9 33 11 30 11 28C6 27 2 25 1 20Z"
            fill="#ee7f12"
          />
          <ellipse cx="64" cy="51" rx="5.5" ry="6" fill="#ee7f12" />
          <ellipse cx="77" cy="51" rx="5.5" ry="6" fill="#ee7f12" />
          <ellipse cx="90" cy="51" rx="5.5" ry="6" fill="#ee7f12" />
        </g>
        <circle cx="40" cy="32" r="4.6" fill="#10202c" />
        <circle cx="51" cy="32" r="4.6" fill="#10202c" />
        <circle cx="41" cy="32" r="2" fill="#8aa4b8" />
        <circle cx="52" cy="32" r="2" fill="#8aa4b8" />
        <path d="M34 25C36 23 38 23 40 22M49 22C51 23 53 24 55 26" stroke="#10202c" strokeWidth="2" />
      </Svg>
      <div className="ml-[32px] flex h-[84px] w-[230px] items-center pt-[2px]">
        <T c="origin-left scale-x-[0.655] text-[44px] font-black leading-none text-white [-webkit-text-stroke:3.5px_#fff] [text-shadow:0_0_4px_#000,0_2px_3px_#000]">UE5 FROM 0 TO 1</T>
      </div>
    </div>
  );
}

function Overlays() {
  return (
    <>
      <svg className="absolute left-[570px] top-[505px] h-[350px] w-[415px]" viewBox="0 0 415 350" fill="none">
        <path d="M6 6.5 394 332 390 342 411 347 404 324 400 328Z" fill="#ff3b3b" />
        <path d="M6 6 393 330" stroke="#ff3b3b" strokeWidth="1.2" />
      </svg>
      <svg className="absolute left-[1054px] top-[809px] h-[31px] w-[24px]" viewBox="0 0 24 31">
        <path d="M1 1V26L7 20 11 29 15 27 11.5 18.5H20Z" fill="#fff" />
      </svg>
      <div className="absolute left-[2005px] top-[128px] flex h-[82px] text-[#d0d0d0]/90">
        <span className="mt-[20px] w-[325px] whitespace-nowrap text-[50px] font-medium leading-[60px]">布兰德儿老蒋</span>
        <span className="block h-[82px] w-[190px] origin-left skew-x-[4deg] scale-x-[0.79] whitespace-nowrap font-['Lato'] text-[108px] font-black leading-[82px]">
          b<span className="text-[86px] tracking-[-4px]">ili</span>b<span className="text-[86px] tracking-[-4px]">ili</span>
        </span>
      </div>
      <svg className="absolute left-[2353px] top-[1230px] h-[118px] w-[122px]" viewBox="0 0 122 118" fill="none">
        <path d="M36 6 45 20M85 6 76 20" stroke="#d3d3d3" strokeWidth="12" strokeLinecap="round" />
        <path
          fillRule="evenodd"
          d="M18 18C45 16 77 16 104 18C115 20 120 27 121 38C122 56 122 78 121 96C120 108 114 115 104 116C77 118 45 118 18 116C8 115 2 108 1 96C0 78 0 56 1 38C2 27 7 20 18 18ZM43 49C42 62 42 74 43 87C44 91 48 92 52 90L82 71C85 69 85 66 82 64L52 46C48 43 44 44 43 49Z"
          fill="#d3d3d3"
        />
      </svg>
      <div className="absolute left-[705px] top-[1467px] flex h-[104px] w-[1179px] items-center rounded-[6px] bg-black/40 pb-[2px] pl-[17px]">
        <T c="text-[63px] leading-none text-white">我们呢可以建立这么一个新的一个状态机</T>
      </div>
    </>
  );
}

export default function App() {
  return (
    <div className="relative flex h-[1600px] w-[2560px] flex-col overflow-hidden bg-black pt-[80px] font-['Roboto','Noto_Sans_CJK_SC',sans-serif] text-[23px] leading-none">
      <div className="flex h-[1357px] shrink-0 flex-col bg-[#151515]">
        <TitleBar />
        <Toolbar />
        <div className="flex h-[1119px] shrink-0">
          <LeftPanel />
          <Center />
          <Details />
        </div>
        <StatusBar />
        <div className="h-[2px] shrink-0 bg-black" />
      </div>
      <Taskbar />
      <ActionMenu />
      <ImeBar />
      <Overlays />
    </div>
  );
}
